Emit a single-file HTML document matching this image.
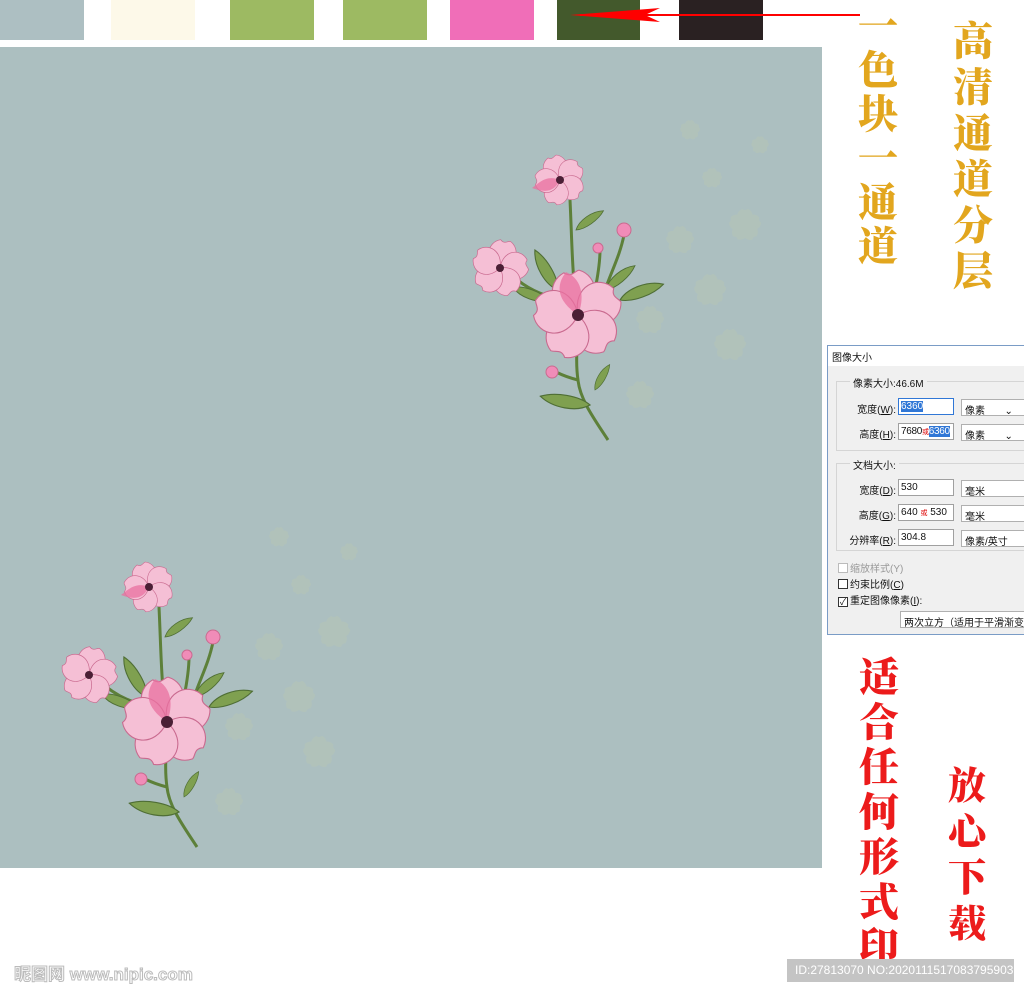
<!DOCTYPE html>
<html><head><meta charset="utf-8">
<style>
*{margin:0;padding:0;box-sizing:border-box}
body{width:1024px;height:989px;background:#fff;position:relative;overflow:hidden;font-family:"Liberation Sans","Noto Sans CJK SC",sans-serif}
.sw{position:absolute;top:0;height:40px;width:84px}
.col{position:absolute;font-family:"Noto Serif CJK SC","Liberation Serif",serif;font-weight:900;text-align:center;line-height:1}
.dlg{position:absolute;left:827px;top:345px;width:200px;height:290px;background:#f0f0f0;border:1px solid #7a9cc6;font-size:10px;color:#111;white-space:nowrap;overflow:hidden}
.dlg .t{height:20px;background:#fff;padding:3px 4px;font-size:10px}
.grp{position:absolute;border:1px solid #d5d5d5}
.lbl{position:absolute;text-align:right;width:68px}
.in{position:absolute;background:#fff;border:1px solid #a0a0a0;height:17px;padding:2px 2px;font-size:10px;overflow:hidden}
.sel{position:absolute;background:#fff;border:1px solid #b0b0b0;height:17px;padding:2px 3px;font-size:10px}
.hl{background:#3077d6;color:#fff}
.cb{display:inline-block;width:10px;height:10px;border:1px solid #333;background:#fff;vertical-align:-1px;margin-right:2px;font-size:9px;line-height:8px;text-align:center}
</style></head><body>
<div class="sw" style="left:0;background:#adbfc2"></div>
<div class="sw" style="left:111px;background:#fdf9e9"></div>
<div class="sw" style="left:230px;background:#9dba62"></div>
<div class="sw" style="left:343px;background:#9dba62"></div>
<div class="sw" style="left:450px;background:#f06eb8"></div>
<div class="sw" style="left:557px;width:83px;background:#43592c"></div>
<div class="sw" style="left:679px;background:#2a2122"></div>
<svg style="position:absolute;left:560px;top:5px" width="305" height="20"><line x1="20" y1="10" x2="300" y2="10" stroke="#f00" stroke-width="2"/><path d="M10 10 L100 3 L85 10 L100 17Z" fill="#f00"/></svg>

<div style="position:absolute;left:0;top:47px;width:822px;height:821px;background:#acbfc0;overflow:hidden">
<svg width="822" height="821" viewBox="0 47 822 821">
<defs>
<path id="pt" d="M0 0 C-26 -8 -24 -34 -6 -40 C0 -34 4 -40 8 -40 C24 -32 24 -8 0 0Z"/>
<g id="fl">
<use href="#pt"/>
<use href="#pt" transform="rotate(72)"/>
<use href="#pt" transform="rotate(144)"/>
<use href="#pt" transform="rotate(216)"/>
<use href="#pt" transform="rotate(288)"/>
</g>
<g id="leaf"><path d="M0 0 C10 -8 30 -8 42 0 C30 6 10 6 0 0Z" fill="#7fa050" stroke="#4f6e35" stroke-width="1"/></g>
<g id="spray">
<g fill="#b8c6b4" opacity=".45">
<use href="#fl" transform="translate(710 290) scale(.4)"/>
<use href="#fl" transform="translate(730 345) scale(.4)"/>
<use href="#fl" transform="translate(680 240) scale(.35)"/>
<use href="#fl" transform="translate(745 225) scale(.4)"/>
<use href="#fl" transform="translate(650 320) scale(.35)"/>
<use href="#fl" transform="translate(640 395) scale(.35)"/>
<use href="#fl" transform="translate(690 130) scale(.25)"/>
<use href="#fl" transform="translate(712 178) scale(.25)"/>
<use href="#fl" transform="translate(760 145) scale(.22)"/>
</g>
<g fill="none" stroke="#5d8039" stroke-width="3">
<path d="M608 440 C595 420 580 400 578 380 C575 360 578 340 578 315"/>
<path d="M578 315 C572 280 572 240 570 200"/>
<path d="M545 295 C530 290 515 280 505 268"/>
<path d="M595 290 C598 275 600 262 600 250"/>
<path d="M605 290 C612 270 620 255 624 235"/>
<path d="M578 380 C570 378 562 375 556 372"/>
</g>
<use href="#leaf" transform="translate(576 230) rotate(-35) scale(.8)"/>
<use href="#leaf" transform="translate(558 290) rotate(-120) scale(1.1)"/>
<use href="#leaf" transform="translate(548 300) rotate(-160) scale(.9)"/>
<use href="#leaf" transform="translate(606 290) rotate(-40) scale(.9)"/>
<use href="#leaf" transform="translate(620 300) rotate(-20) scale(1.1)"/>
<use href="#leaf" transform="translate(595 390) rotate(-60) scale(.7)"/>
<use href="#leaf" transform="translate(590 405) rotate(-170) scale(1.2)"/>
<g fill="#f5bfd5" stroke="#c96a8f" stroke-width="1">
<use href="#fl" transform="translate(578 315) rotate(-10) scale(1.1)"/>
<use href="#fl" transform="translate(500 268) rotate(10) scale(.7)"/>
<use href="#fl" transform="translate(560 180) rotate(-20) scale(.62)"/>
<circle cx="624" cy="230" r="7" fill="#f08cb8"/>
<circle cx="598" cy="248" r="5" fill="#f08cb8"/>
<circle cx="552" cy="372" r="6" fill="#f08cb8"/>
</g>
<g fill="#e8709f" opacity=".75">
<path d="M578 315 C556 300 556 285 566 272 C584 280 584 300 578 315Z"/>
<path d="M560 180 C546 174 538 184 532 188 C548 194 555 190 560 180Z"/>
</g>
<circle cx="578" cy="315" r="6" fill="#4a1f35"/>
<circle cx="500" cy="268" r="4" fill="#4a1f35"/>
<circle cx="560" cy="180" r="4" fill="#4a1f35"/>
</g>
</defs>
<use href="#spray"/>
<use href="#spray" transform="translate(-411 407)"/>
</svg>
</div>

<div class="col" style="left:856px;top:2px;width:44px;font-size:40px;color:#e2a61e;line-height:44px">一<br>色<br>块<br>一<br>通<br>道</div>
<div class="col" style="left:950px;top:16px;width:46px;font-size:40px;color:#e2a61e;line-height:46px">高<br>清<br>通<br>道<br>分<br>层</div>
<div class="col" style="left:856px;top:652px;width:46px;font-size:40px;color:#ec1b1b;line-height:45px">适<br>合<br>任<br>何<br>形<br>式<br>印</div>
<div class="col" style="left:944px;top:760px;width:46px;font-size:38px;color:#ec1b1b;line-height:46px">放<br>心<br>下<br>载</div>

<div class="dlg">
<div class="t">图像大小</div>
<div class="grp" style="left:8px;top:35px;width:195px;height:70px"></div>
<div style="position:absolute;left:22px;top:29px;background:#f0f0f0;padding:0 3px">像素大小:46.6M</div>
<div class="lbl" style="left:0;top:55px">宽度(<u>W</u>):</div>
<div class="in" style="left:70px;top:52px;width:56px;border-color:#3077d6"><span class="hl">6360</span></div>
<div class="sel" style="left:133px;top:53px;width:70px">像素 &nbsp; &nbsp; &nbsp; ⌄</div>
<div class="lbl" style="left:0;top:80px">高度(<u>H</u>):</div>
<div class="in" style="left:70px;top:77px;width:56px;letter-spacing:-.3px">7680<span style="color:#d00;font-size:7px">或</span><span class="hl">6360</span></div>
<div class="sel" style="left:133px;top:78px;width:70px">像素 &nbsp; &nbsp; &nbsp; ⌄</div>
<div class="grp" style="left:8px;top:117px;width:195px;height:88px"></div>
<div style="position:absolute;left:22px;top:111px;background:#f0f0f0;padding:0 3px">文档大小:</div>
<div class="lbl" style="left:0;top:136px">宽度(<u>D</u>):</div>
<div class="in" style="left:70px;top:133px;width:56px">530</div>
<div class="sel" style="left:133px;top:134px;width:70px">毫米</div>
<div class="lbl" style="left:0;top:161px">高度(<u>G</u>):</div>
<div class="in" style="left:70px;top:158px;width:56px">640 <span style="color:#d00;font-size:7px">或</span> 530</div>
<div class="sel" style="left:133px;top:159px;width:70px">毫米</div>
<div class="lbl" style="left:0;top:186px">分辨率(<u>R</u>):</div>
<div class="in" style="left:70px;top:183px;width:56px">304.8</div>
<div class="sel" style="left:133px;top:184px;width:70px">像素/英寸</div>
<div style="position:absolute;left:10px;top:214px;color:#999"><span class="cb" style="border-color:#bbb"></span>缩放样式(Y)</div>
<div style="position:absolute;left:10px;top:230px"><span class="cb"></span>约束比例(<u>C</u>)</div>
<div style="position:absolute;left:10px;top:246px"><span class="cb">✓</span>重定图像像素(<u>I</u>):</div>
<div class="sel" style="left:72px;top:265px;width:130px;overflow:hidden">两次立方（适用于平滑渐变</div>
</div>

<div style="position:absolute;left:14px;top:960px;font-size:17px;font-weight:bold;color:#fff;-webkit-text-stroke:1px #bbb;white-space:nowrap">昵图网 www.nipic.com</div>
<div style="position:absolute;left:787px;top:959px;width:227px;height:23px;background:#c4c4c4;color:#fff;font-size:12px;line-height:23px;padding-left:8px;white-space:nowrap;overflow:hidden">ID:27813070 NO:20201115170837959039</div>
</body></html>
